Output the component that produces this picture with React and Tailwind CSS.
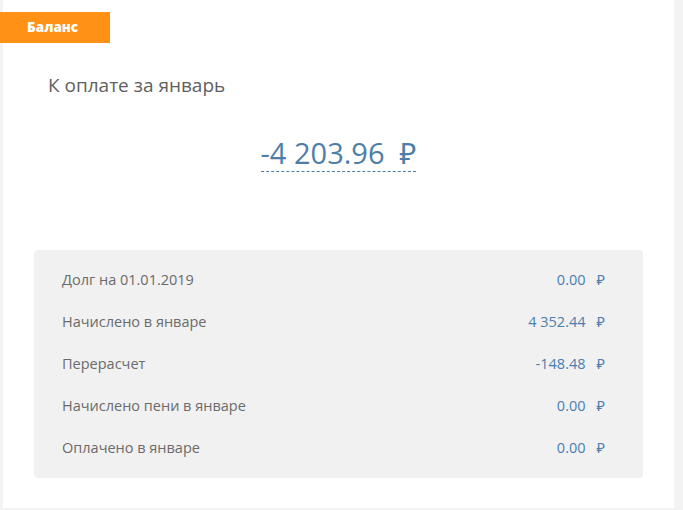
const rows = [
  { label: 'Долг на 01.01.2019', value: '0.00' },
  { label: 'Начислено в январе', value: '4 352.44' },
  { label: 'Перерасчет', value: '-148.48' },
  { label: 'Начислено пени в январе', value: '0.00' },
  { label: 'Оплачено в январе', value: '0.00' },
]

export default function App() {
  return (
    <div
      className="h-[510px] w-[683px] overflow-hidden bg-[#f3f3f3]"
      style={{ fontFamily: '"Open Sans", "Noto Sans", sans-serif' }}
    >
      <div className="ml-[3px] h-[508px] w-[671px] bg-white pt-3">
        <div className="-ml-[3px] flex h-[31px] w-[110px] items-center bg-[#ff9116] pl-[27px] text-[13.5px] font-extrabold text-white">
          Баланс
        </div>
        <div className="mt-[30px] pl-[45px] text-[19px] leading-6 text-[#606060]">К оплате за январь</div>
        <div className="mt-[38px] flex justify-center">
          <span className="border-b border-dashed border-[#4d7ea8] text-[29px] leading-9 text-[#4d7ea8]">
            -4 203.96&nbsp;&nbsp;₽
          </span>
        </div>
        <div className="mx-[31px] mt-[78px] flex flex-col rounded bg-[#f1f1f1] px-[28px] py-[9px]">
          {rows.map((r) => (
            <div key={r.label} className="flex h-[42px] items-center justify-between pr-[10px] text-[14.5px]">
              <span className="text-[#6b6b6b]">{r.label}</span>
              <span className="text-[#4d7ead]">
                {r.value}
                <span className="ml-[11px]">₽</span>
              </span>
            </div>
          ))}
        </div>
      </div>
    </div>
  )
}
